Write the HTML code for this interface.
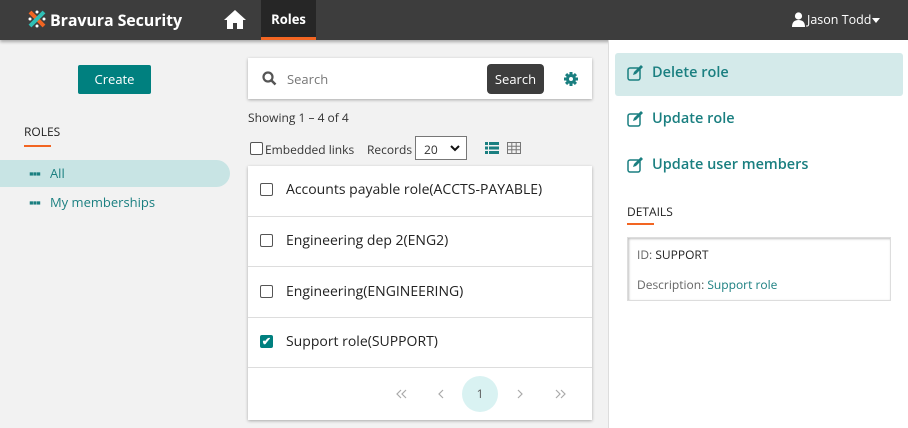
<!DOCTYPE html>
<html><head><meta charset="utf-8"><style>
*{box-sizing:border-box;margin:0;padding:0}
body{width:908px;height:428px;overflow:hidden;background:#f2f2f2;font-family:"Open Sans","Liberation Sans",sans-serif;position:relative;color:#333}
.abs{position:absolute}
.hdr{left:0;top:0;width:908px;height:40px;background:#3d3d3d;box-shadow:0 2px 3px rgba(0,0,0,.3)}
.teal{color:#1a7f80}
</style></head><body>
<div class="abs hdr"></div>
<svg class="abs" style="left:27px;top:9px" width="20" height="20" viewBox="0 0 20 20"><path d="M3 3 L17 17" stroke="#f26522" stroke-width="4"/><path d="M17 3 L3 17" stroke="#2fbfb6" stroke-width="4"/><circle cx="3" cy="10" r="1.5" fill="#fff"/><circle cx="17" cy="10" r="1.5" fill="#fff"/><circle cx="10" cy="3" r="1.5" fill="#fff"/><circle cx="10" cy="17" r="1.5" fill="#fff"/></svg>
<div class="abs" style="left:50px;top:9px;color:#fff;font-size:16px;font-weight:bold;letter-spacing:-0.1px">Bravura Security</div>
<svg class="abs" style="left:223px;top:9px" width="24" height="21" viewBox="0 0 24 21"><path d="M12 1 L1 11 L4 11 L4 20 L10 20 L10 14 L14 14 L14 20 L20 20 L20 11 L23 11 Z" fill="#fff"/></svg>
<div class="abs" style="left:261px;top:0;width:55px;height:40px;background:#262626;border-bottom:3px solid #f26522;color:#fff;font-size:13px;font-weight:bold;text-align:center;line-height:38px">Roles</div>
<svg class="abs" style="left:792px;top:12px" width="13" height="15" viewBox="0 0 13 15"><circle cx="6.5" cy="4" r="3.6" fill="#fff"/><path d="M0 15 Q0 8 6.5 8 Q13 8 13 15 Z" fill="#fff"/></svg>
<div class="abs" style="left:807px;top:11px;color:#fff;font-size:12.5px">Jason Todd</div>
<div class="abs" style="left:872px;top:18px;border-left:4px solid transparent;border-right:4px solid transparent;border-top:5px solid #fff"></div>

<div class="abs" style="left:78px;top:65px;width:73px;height:29px;background:#00807f;border-radius:2px;color:#fff;font-size:13px;text-align:center;line-height:29px">Create</div>
<div class="abs" style="left:24px;top:123px;font-size:12px;color:#222">ROLES</div>
<div class="abs" style="left:24px;top:145px;width:27px;height:2px;background:#f26522"></div>
<div class="abs" style="left:0;top:160px;width:230px;height:27px;background:#c8e4e4;border-radius:0 14px 14px 0"></div>
<div class="abs teal" style="left:29px;top:165px;font-size:13px;line-height:16px"><b style="letter-spacing:-1px">▪▪▪</b>&nbsp;&nbsp; All</div>
<div class="abs teal" style="left:29px;top:194px;font-size:13px;line-height:16px"><b style="letter-spacing:-1px">▪▪▪</b>&nbsp;&nbsp; My memberships</div>

<div class="abs" style="left:248px;top:58px;width:344px;height:41px;background:#fff;box-shadow:0 1px 3px rgba(0,0,0,.3)"></div>
<svg class="abs" style="left:262px;top:71px" width="15" height="15" viewBox="0 0 15 15"><circle cx="6" cy="6" r="4.5" fill="none" stroke="#555" stroke-width="2.2"/><path d="M9.5 9.5 L13.5 13.5" stroke="#555" stroke-width="2.5"/></svg>
<div class="abs" style="left:287px;top:70px;font-size:13px;color:#777">Search</div>
<div class="abs" style="left:487px;top:64px;width:57px;height:30px;background:#3d3d3d;border-radius:4px;color:#fff;font-size:13px;text-align:center;line-height:30px">Search</div>
<svg class="abs" style="left:564px;top:72px" width="14" height="14" viewBox="0 0 14 14"><g fill="#1a7f80"><circle cx="7" cy="7" r="5"/><rect x="5.5" y="0" width="3" height="14"/><rect x="0" y="5.5" width="14" height="3"/><rect x="5.5" y="0" width="3" height="14" transform="rotate(45 7 7)"/><rect x="5.5" y="0" width="3" height="14" transform="rotate(-45 7 7)"/></g><circle cx="7" cy="7" r="2" fill="#fff"/></svg>
<div class="abs" style="left:248px;top:109px;font-size:12px;color:#333">Showing 1 – 4 of 4</div>
<div class="abs" style="left:250px;top:142px;width:13px;height:13px;border:1px solid #555;border-radius:2px;background:#fff"></div>
<div class="abs" style="left:265px;top:141px;font-size:12px">Embedded links</div>
<div class="abs" style="left:367px;top:141px;font-size:12px">Records</div>
<div class="abs" style="left:415px;top:136px;width:52px;height:24px;border:1px solid #777;background:#fff;font-size:12px;padding:4px 0 0 8px">20<svg style="position:absolute;right:6px;top:8px" width="10" height="7" viewBox="0 0 10 7"><path d="M1 1 L5 5 L9 1" fill="none" stroke="#111" stroke-width="2"/></svg></div>
<svg class="abs" style="left:485px;top:142px" width="14" height="12" viewBox="0 0 14 12"><g fill="#1a7f80"><rect x="0" y="0" width="3" height="3"/><rect x="4" y="0" width="10" height="3"/><rect x="0" y="4.5" width="3" height="3"/><rect x="4" y="4.5" width="10" height="3"/><rect x="0" y="9" width="3" height="3"/><rect x="4" y="9" width="10" height="3"/></g></svg>
<svg class="abs" style="left:507px;top:142px" width="14" height="12" viewBox="0 0 14 12"><g fill="none" stroke="#777" stroke-width="1"><rect x=".5" y=".5" width="13" height="11"/><path d="M.5 4.2H13.5M.5 7.8H13.5M4.8 .5V11.5M9.2 .5V11.5"/></g></svg>

<div class="abs" style="left:248px;top:166px;width:344px;height:254px;background:#fff;box-shadow:0 1px 3px rgba(0,0,0,.3)"></div>
<div class="abs" style="left:248px;top:216px;width:344px;height:1px;background:#ddd"></div>
<div class="abs" style="left:248px;top:266px;width:344px;height:1px;background:#ddd"></div>
<div class="abs" style="left:248px;top:317px;width:344px;height:1px;background:#ddd"></div>
<div class="abs" style="left:248px;top:367px;width:344px;height:1px;background:#ddd"></div>
<div class="abs" style="left:260px;top:183px;width:13px;height:13px;border:1px solid #555;border-radius:2px"></div>
<div class="abs" style="left:286px;top:180px;font-size:14px;color:#222">Accounts payable role(ACCTS-PAYABLE)</div>
<div class="abs" style="left:260px;top:234px;width:13px;height:13px;border:1px solid #555;border-radius:2px"></div>
<div class="abs" style="left:286px;top:231px;font-size:14px;color:#222">Engineering dep 2(ENG2)</div>
<div class="abs" style="left:260px;top:285px;width:13px;height:13px;border:1px solid #555;border-radius:2px"></div>
<div class="abs" style="left:286px;top:282px;font-size:14px;color:#222">Engineering(ENGINEERING)</div>
<div class="abs" style="left:260px;top:335px;width:13px;height:13px;background:#00807f;border-radius:2px;color:#fff;font-size:11px;line-height:13px;text-align:center;font-weight:bold">✔</div>
<div class="abs" style="left:286px;top:332px;font-size:14px;color:#222">Support role(SUPPORT)</div>
<div class="abs" style="left:462px;top:376px;width:36px;height:36px;border-radius:50%;background:#d9f2f2;font-size:12px;color:#555;text-align:center;line-height:36px">1</div>
<svg class="abs" style="left:396px;top:389px" width="12" height="10" viewBox="0 0 12 10"><path d="M5 1 L1 5 L5 9 M10 1 L6 5 L10 9" fill="none" stroke="#aaa" stroke-width="1.2"/></svg>
<svg class="abs" style="left:438px;top:389px" width="6" height="10" viewBox="0 0 6 10"><path d="M5 1 L1 5 L5 9" fill="none" stroke="#aaa" stroke-width="1.2"/></svg>
<svg class="abs" style="left:517px;top:389px" width="6" height="10" viewBox="0 0 6 10"><path d="M1 1 L5 5 L1 9" fill="none" stroke="#aaa" stroke-width="1.2"/></svg>
<svg class="abs" style="left:554px;top:389px" width="12" height="10" viewBox="0 0 12 10"><path d="M2 1 L6 5 L2 9 M7 1 L11 5 L7 9" fill="none" stroke="#aaa" stroke-width="1.2"/></svg>

<div class="abs" style="left:608px;top:40px;width:300px;height:388px;background:#fff;border-left:1px solid #ddd"></div>
<div class="abs" style="left:615px;top:53px;width:288px;height:43px;background:#d4eaea;border-radius:3px"></div>
<svg class="abs" style="left:627px;top:65px" width="18" height="16" viewBox="0 0 18 16"><rect x="1" y="3" width="12" height="12" rx="2" fill="none" stroke="#1a7f80" stroke-width="1.5"/><path d="M6 10 L7 7 L14 0 L16 2 L9 9 Z" fill="#1a7f80"/></svg>
<div class="abs teal" style="left:652px;top:63px;font-size:14.5px;font-weight:600">Delete role</div>
<svg class="abs" style="left:627px;top:111px" width="18" height="16" viewBox="0 0 18 16"><rect x="1" y="3" width="12" height="12" rx="2" fill="none" stroke="#1a7f80" stroke-width="1.5"/><path d="M6 10 L7 7 L14 0 L16 2 L9 9 Z" fill="#1a7f80"/></svg>
<div class="abs teal" style="left:652px;top:109px;font-size:14.5px;font-weight:600">Update role</div>
<svg class="abs" style="left:627px;top:157px" width="18" height="16" viewBox="0 0 18 16"><rect x="1" y="3" width="12" height="12" rx="2" fill="none" stroke="#1a7f80" stroke-width="1.5"/><path d="M6 10 L7 7 L14 0 L16 2 L9 9 Z" fill="#1a7f80"/></svg>
<div class="abs teal" style="left:652px;top:155px;font-size:14.5px;font-weight:600">Update user members</div>
<div class="abs" style="left:627px;top:203px;font-size:12px;color:#222">DETAILS</div>
<div class="abs" style="left:627px;top:223px;width:27px;height:2px;background:#f26522"></div>
<div class="abs" style="left:627px;top:237px;width:264px;height:64px;border:1px solid #ddd;box-shadow:inset 1px 1px 2px rgba(0,0,0,.25)"></div>
<div class="abs" style="left:637px;top:246px;font-size:12px;color:#666">ID: <span style="color:#222">SUPPORT</span></div>
<div class="abs" style="left:637px;top:276px;font-size:12px;color:#666">Description: <span class="teal">Support role</span></div>
</body></html>
